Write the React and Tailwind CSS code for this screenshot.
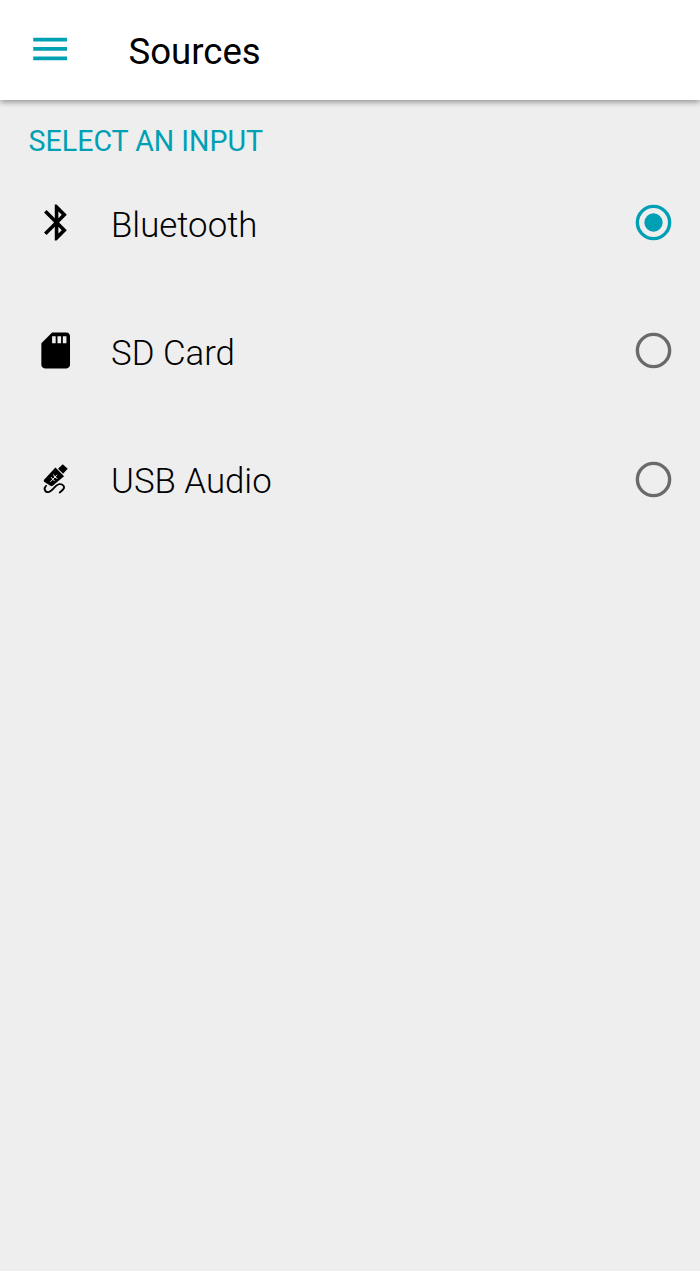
import React from "react";

function Bluetooth() {
  return (
    <path d="M17.71 7.71 12 2h-1v7.59L6.41 5 5 6.41 10.59 12 5 17.59 6.41 19 11 14.41V22h1l5.71-5.71-4.3-4.29 4.3-4.29zM13 5.83l1.88 1.88L13 9.59V5.83zm1.88 10.46L13 18.17v-3.76l1.88 1.88z" transform="translate(.5 0)" />
  );
}

function SdCard() {
  return (
    <path d="M18 2h-8L4.02 8 4 20c0 1.1.9 2 2 2h12c1.1 0 2-.9 2-2V4c0-1.1-.9-2-2-2zm-6 6h-2V4h2v4zm3 0h-2V4h2v4zm3 0h-2V4h2v4z" />
  );
}

function UsbStick() {
  return (
    <g transform="translate(.5 -1.4) scale(.186)">
      <path d="M83 26 98 40 84 55 69 40z" />
      <path d="M61 36 87 62 53 91 Q50 93 46 91L27 79 Q25 76 27 73z" />
      <g fill="none" stroke="#eeeeee" strokeWidth="3">
        <path d="M46 79 66 58M48 65 53 71 59 77M55 57 59 65 67 69" />
      </g>
      <path
        d="M33 91C25 98 29 110 39 110C51 109 60 88 73 86C84 85 91 94 84 102L74 111"
        fill="none"
        stroke="black"
        strokeWidth="5.5"
        strokeLinecap="round"
      />
    </g>
  );
}

function Radio({ checked }) {
  return (
    <svg viewBox="0 0 24 24" className={checked ? "size-[43px] text-[#00a0b4]" : "size-[43px] text-[#6a6a6a]"}>
      <circle cx="12" cy="12" r="9" fill="none" stroke="currentColor" strokeWidth="1.9" />
      {checked && <circle cx="12" cy="12" r="5.1" fill="currentColor" />}
    </svg>
  );
}

const sources = [
  { name: "Bluetooth", Icon: Bluetooth, checked: true },
  { name: "SD Card", Icon: SdCard, checked: false },
  { name: "USB Audio", Icon: UsbStick, checked: false },
];

export default function App() {
  return (
    <div className="flex h-[1271px] w-[700px] flex-col overflow-hidden bg-[#eeeeee] font-['Roboto',sans-serif] text-black">
      <header className="z-10 flex h-[99.5px] shrink-0 items-center bg-white pl-[27.5px] shadow-[0_2px_6px_rgba(0,0,0,0.4)]">
        <svg viewBox="0.2 -0.2 24 24" className="mb-[2px] size-[45px] text-[#00a0b4]" fill="currentColor">
          <path d="M3 18h18v-2H3v2zm0-5h18v-2H3v2zm0-7v2h18V6H3z" />
        </svg>
        <h1 className="ml-[56px] pt-[4px] text-[36.6px] leading-[44px]">Sources</h1>
      </header>
      <h2 className="pt-[23.5px] pl-[28.5px] text-[28.6px] leading-[36px] text-[#00a0b4]">SELECT AN INPUT</h2>
      <ul>
        {sources.map(({ name, Icon, checked }) => (
          <li key={name} className="flex h-[128.3px] items-start pr-[25px] pl-[34px]">
            <svg viewBox="-0.1 0 24 24" className="mt-[42px] size-[43px]">
              <Icon />
            </svg>
            <span className="mt-[44.5px] ml-[34px] flex-1 text-[34.8px] leading-[42px] font-light">{name}</span>
            <span className="mt-[42px]">
              <Radio checked={checked} />
            </span>
          </li>
        ))}
      </ul>
    </div>
  );
}
